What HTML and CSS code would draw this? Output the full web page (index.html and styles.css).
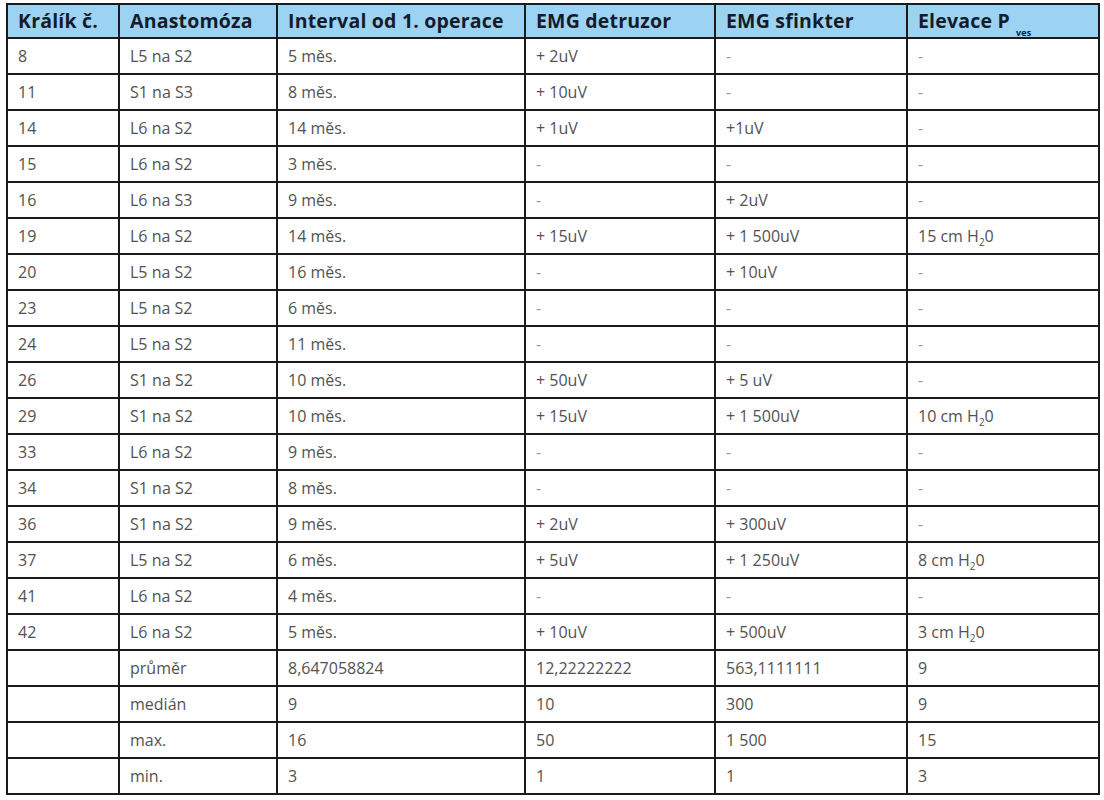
FILE: index.html
```html
<!DOCTYPE html>
<html lang="cs">
<head>
<meta charset="utf-8">
<title>Tabulka</title>
<link rel="stylesheet" href="styles.css">
</head>
<body>
<table class="data">
<colgroup>
<col class="c1"><col class="c2"><col class="c3"><col class="c4"><col class="c5"><col class="c6">
</colgroup>
<thead>
<tr><th>Králík č.</th><th>Anastomóza</th><th>Interval od 1. operace</th><th>EMG detruzor</th><th>EMG sfinkter</th><th>Elevace P<sub class="ves">ves</sub></th></tr>
</thead>
<tbody>
<tr><td>8</td><td>L5 na S2</td><td>5 měs.</td><td>+ 2uV</td><td class="na">-</td><td class="na">-</td></tr>
<tr><td>11</td><td>S1 na S3</td><td>8 měs.</td><td>+ 10uV</td><td class="na">-</td><td class="na">-</td></tr>
<tr><td>14</td><td>L6 na S2</td><td>14 měs.</td><td>+ 1uV</td><td>+1uV</td><td class="na">-</td></tr>
<tr><td>15</td><td>L6 na S2</td><td>3 měs.</td><td class="na">-</td><td class="na">-</td><td class="na">-</td></tr>
<tr><td>16</td><td>L6 na S3</td><td>9 měs.</td><td class="na">-</td><td>+ 2uV</td><td class="na">-</td></tr>
<tr><td>19</td><td>L6 na S2</td><td>14 měs.</td><td>+ 15uV</td><td>+ 1 500uV</td><td>15 cm H<sub>2</sub>0</td></tr>
<tr><td>20</td><td>L5 na S2</td><td>16 měs.</td><td class="na">-</td><td>+ 10uV</td><td class="na">-</td></tr>
<tr><td>23</td><td>L5 na S2</td><td>6 měs.</td><td class="na">-</td><td class="na">-</td><td class="na">-</td></tr>
<tr><td>24</td><td>L5 na S2</td><td>11 měs.</td><td class="na">-</td><td class="na">-</td><td class="na">-</td></tr>
<tr><td>26</td><td>S1 na S2</td><td>10 měs.</td><td>+ 50uV</td><td>+ 5 uV</td><td class="na">-</td></tr>
<tr><td>29</td><td>S1 na S2</td><td>10 měs.</td><td>+ 15uV</td><td>+ 1 500uV</td><td>10 cm H<sub>2</sub>0</td></tr>
<tr><td>33</td><td>L6 na S2</td><td>9 měs.</td><td class="na">-</td><td class="na">-</td><td class="na">-</td></tr>
<tr><td>34</td><td>S1 na S2</td><td>8 měs.</td><td class="na">-</td><td class="na">-</td><td class="na">-</td></tr>
<tr><td>36</td><td>S1 na S2</td><td>9 měs.</td><td>+ 2uV</td><td>+ 300uV</td><td class="na">-</td></tr>
<tr><td>37</td><td>L5 na S2</td><td>6 měs.</td><td>+ 5uV</td><td>+ 1 250uV</td><td>8 cm H<sub>2</sub>0</td></tr>
<tr><td>41</td><td>L6 na S2</td><td>4 měs.</td><td class="na">-</td><td class="na">-</td><td class="na">-</td></tr>
<tr><td>42</td><td>L6 na S2</td><td>5 měs.</td><td>+ 10uV</td><td>+ 500uV</td><td>3 cm H<sub>2</sub>0</td></tr>
<tr><td></td><td>průměr</td><td>8,647058824</td><td>12,22222222</td><td>563,1111111</td><td>9</td></tr>
<tr><td></td><td>medián</td><td>9</td><td>10</td><td>300</td><td>9</td></tr>
<tr><td></td><td>max.</td><td>16</td><td>50</td><td>1 500</td><td>15</td></tr>
<tr><td></td><td>min.</td><td>3</td><td>1</td><td>1</td><td>3</td></tr>
</tbody>
</table>
</body>
</html>
```

FILE: styles.css
```css
html, body {
  margin: 0;
  padding: 0;
  background: #ffffff;
}
body {
  padding: 3px 0 0 6px;
  font-family: "Open Sans", "Noto Sans", sans-serif;
}
.data {
  border-collapse: collapse;
  table-layout: fixed;
  width: 1092px;
}
.c1 { width: 112px; }
.c2 { width: 158px; }
.c3 { width: 248px; }
.c4 { width: 190px; }
.c5 { width: 192px; }
.c6 { width: 192px; }
.data th, .data td {
  border: 2px solid #1a1a1a;
  text-align: left;
  padding: 0 0 0 10px;
  white-space: nowrap;
  overflow: hidden;
}
.data th {
  background: #9dd3f2;
  color: #141c2c;
  font-weight: 700;
  font-size: 19.5px;
  height: 32px;
  line-height: 30px;
  letter-spacing: 0.2px;
}
.data td {
  height: 34px;
  color: #525252;
  font-size: 16px;
  font-weight: 400;
  line-height: 32px;
  letter-spacing: 0;
}
.data td.na {
  color: #9a9a9a;
}
.data sub {
  font-size: 10px;
  vertical-align: -4px;
  line-height: 0;
}
.data sub.ves {
  font-size: 9px;
  vertical-align: -8px;
  margin-left: 6px;
}
```
